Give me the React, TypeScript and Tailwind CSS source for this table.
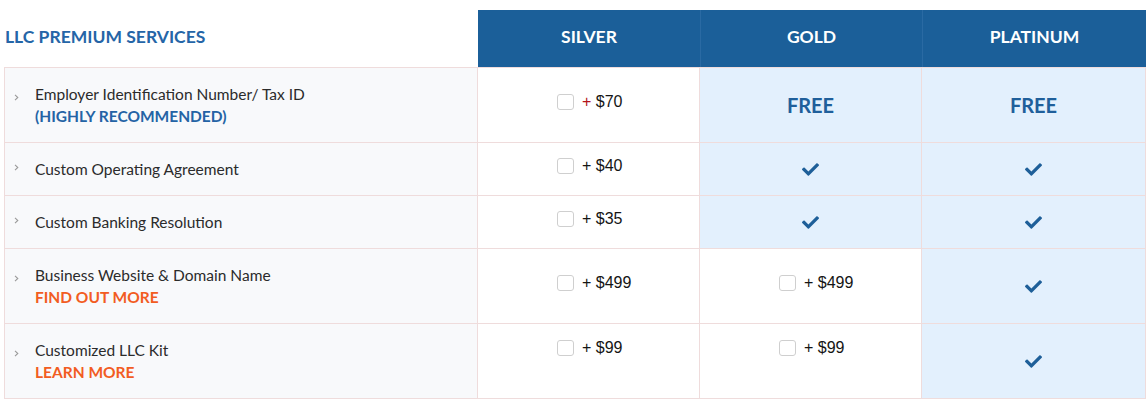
import { FaCheck } from "react-icons/fa";

type Cell = { kind: "price"; price: string; redPlus?: boolean } | { kind: "check" } | { kind: "free" };

type Row = {
  label: string;
  sub?: { text: string; tone: "blue" | "orange" };
  height: string;
  priceTop: string;
  silver: Cell;
  gold: Cell;
  platinum: Cell;
  goldHi: boolean;
};

const rows: Row[] = [
  {
    label: "Employer Identification Number/ Tax ID",
    sub: { text: "(HIGHLY RECOMMENDED)", tone: "blue" },
    height: "h-[75px]",
    priceTop: "pt-[25px]",
    silver: { kind: "price", price: "$70", redPlus: true },
    gold: { kind: "free" },
    platinum: { kind: "free" },
    goldHi: true,
  },
  {
    label: "Custom Operating Agreement",
    height: "h-[53px]",
    priceTop: "pt-[14px]",
    silver: { kind: "price", price: "$40" },
    gold: { kind: "check" },
    platinum: { kind: "check" },
    goldHi: true,
  },
  {
    label: "Custom Banking Resolution",
    height: "h-[53px]",
    priceTop: "pt-[14px]",
    silver: { kind: "price", price: "$35" },
    gold: { kind: "check" },
    platinum: { kind: "check" },
    goldHi: true,
  },
  {
    label: "Business Website & Domain Name",
    sub: { text: "FIND OUT MORE", tone: "orange" },
    height: "h-[75px]",
    priceTop: "pt-[25px]",
    silver: { kind: "price", price: "$499" },
    gold: { kind: "price", price: "$499" },
    platinum: { kind: "check" },
    goldHi: false,
  },
  {
    label: "Customized LLC Kit",
    sub: { text: "LEARN MORE", tone: "orange" },
    height: "h-[75px]",
    priceTop: "pt-[15px]",
    silver: { kind: "price", price: "$99" },
    gold: { kind: "price", price: "$99" },
    platinum: { kind: "check" },
    goldHi: false,
  },
];

function Chevron({ twoLine }: { twoLine: boolean }) {
  return (
    <svg
      width="5"
      height="7"
      viewBox="0 0 5 7"
      className={`ml-[9px] mr-[16px] shrink-0 ${twoLine ? "-mt-[15px]" : "-mt-[4px]"}`}
    >
      <path d="M1 0.8 L3.8 3.5 L1 6.2" fill="none" stroke="#9a9a9a" strokeWidth="1.1" />
    </svg>
  );
}

function CellBody({ cell, priceTop }: { cell: Cell; priceTop: string }) {
  if (cell.kind === "free") {
    return (
      <div className="flex h-full items-center justify-center text-[20px] font-bold text-[#1f5f9b]">FREE</div>
    );
  }
  if (cell.kind === "check") {
    return (
      <div className="flex h-full items-center justify-center text-[#1e5f99]">
        <FaCheck size={17} />
      </div>
    );
  }
  // 價格欄：勾選框固定靠左對齊在同一位置，不隨金額長短置中
  return (
    <div className={`flex pl-[79px] ${priceTop}`}>
      <div className="flex items-center gap-[8px] font-['Liberation_Sans',Arial,sans-serif] text-[16px] leading-[18px] text-[#151515]">
        <span className="h-[16px] w-[17px] rounded-[3px] border border-[#cfcfcf] bg-white" />
        <span>
          <span className={cell.redPlus ? "text-[#b3131b]" : ""}>+</span> {cell.price}
        </span>
      </div>
    </div>
  );
}

export default function App() {
  return (
    <div className="min-h-screen bg-white pl-[4px] pt-[10px] font-['Lato','Open_Sans',sans-serif]">
      <div className="w-[1142px]">
        {/* header */}
        <div className="grid h-[57px] grid-cols-[474px_222px_222px_224px]">
          <div className="flex items-center pb-[3px] pl-[1px] text-[17.5px] font-bold text-[#2565a7]">
            LLC PREMIUM SERVICES
          </div>
          {["SILVER", "GOLD", "PLATINUM"].map((t, i) => (
            <div
              key={t}
              className={`flex items-center justify-center pb-[3px] bg-[#1b5f99] text-[17.5px] font-bold text-white ${
                i > 0 ? "border-l border-[#2a6aa3]" : ""
              }`}
            >
              {t}
            </div>
          ))}
        </div>

        {/* body */}
        <div className="border-l border-t border-[#efdcdc]">
          {rows.map((r) => (
            <div key={r.label} className={`grid grid-cols-[473px_222px_222px_224px] ${r.height}`}>
              <div className="flex items-center border-b border-r border-[#efdcdc] bg-[#f8f9fb]">
                <Chevron twoLine={!!r.sub} />
                <div className="text-[15.5px] leading-[22px] text-[#2b2b2b]">
                  <div>{r.label}</div>
                  {r.sub && (
                    <div
                      className={`font-bold ${r.sub.tone === "blue" ? "text-[#2463a5]" : "text-[#f25c22]"}`}
                    >
                      {r.sub.text}
                    </div>
                  )}
                </div>
              </div>
              <div className="border-b border-r border-[#efdcdc] bg-white">
                <CellBody cell={r.silver} priceTop={r.priceTop} />
              </div>
              <div className={`border-b border-r border-[#efdcdc] ${r.goldHi ? "bg-[#e3f0fd]" : "bg-white"}`}>
                <CellBody cell={r.gold} priceTop={r.priceTop} />
              </div>
              <div className="border-b border-r border-[#efdcdc] bg-[#e3f0fd]">
                <CellBody cell={r.platinum} priceTop={r.priceTop} />
              </div>
            </div>
          ))}
        </div>
      </div>
    </div>
  );
}
